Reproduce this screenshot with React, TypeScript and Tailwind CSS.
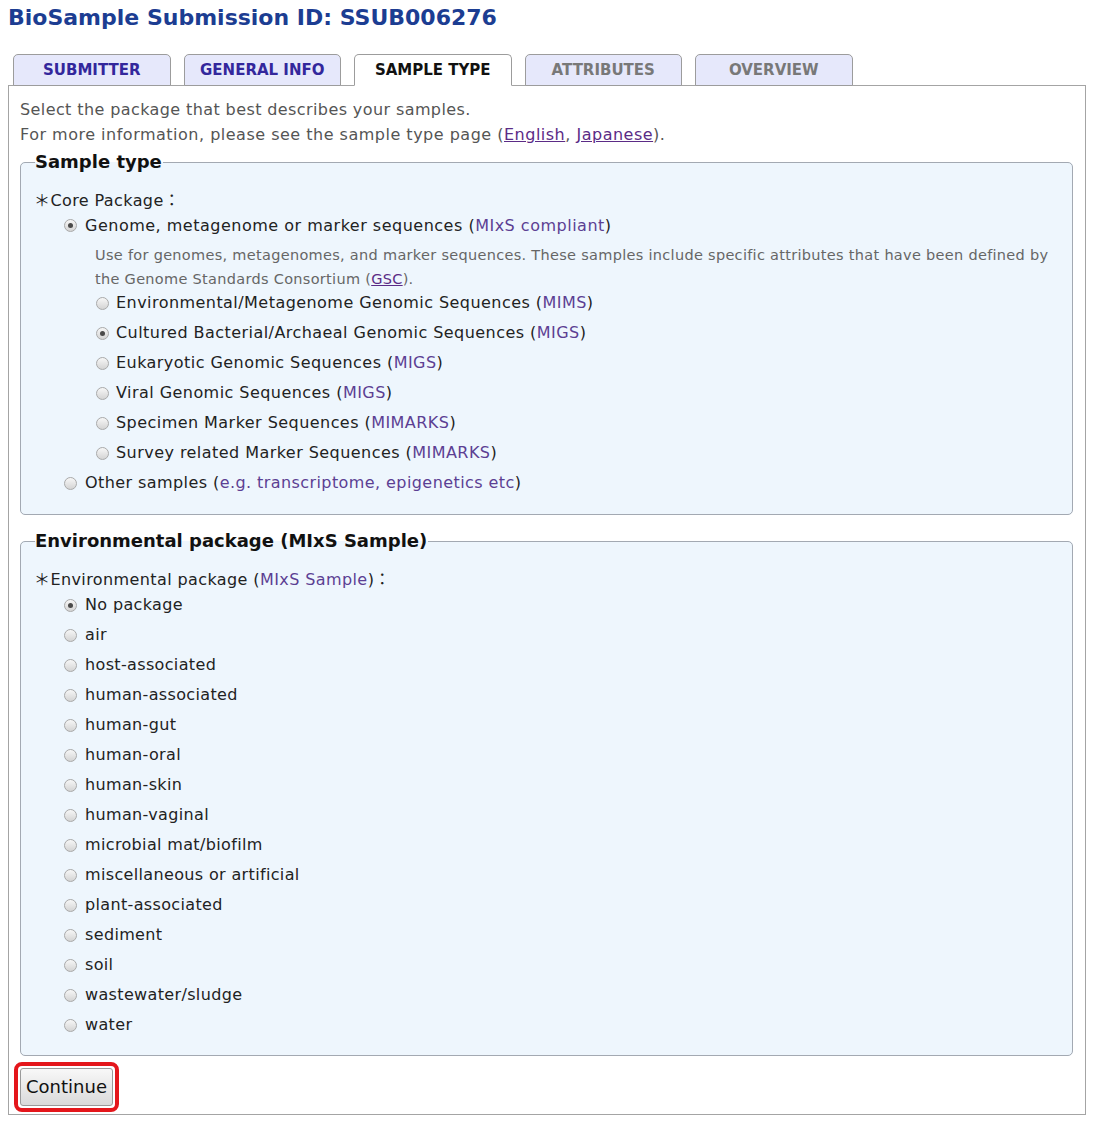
import React from "react";

const tabs = [
  { label: "SUBMITTER", state: "link" },
  { label: "GENERAL INFO", state: "link" },
  { label: "SAMPLE TYPE", state: "active" },
  { label: "ATTRIBUTES", state: "off" },
  { label: "OVERVIEW", state: "off" },
];

const coreSubs = [
  { text: "Environmental/Metagenome Genomic Sequences", tag: "MIMS" },
  { text: "Cultured Bacterial/Archaeal Genomic Sequences", tag: "MIGS", checked: true },
  { text: "Eukaryotic Genomic Sequences", tag: "MIGS" },
  { text: "Viral Genomic Sequences", tag: "MIGS" },
  { text: "Specimen Marker Sequences", tag: "MIMARKS" },
  { text: "Survey related Marker Sequences", tag: "MIMARKS" },
];

const envPackages = [
  "No package",
  "air",
  "host-associated",
  "human-associated",
  "human-gut",
  "human-oral",
  "human-skin",
  "human-vaginal",
  "microbial mat/biofilm",
  "miscellaneous or artificial",
  "plant-associated",
  "sediment",
  "soil",
  "wastewater/sludge",
  "water",
];

const Radio = ({ checked }: { checked?: boolean }) => (
  <span className="inline-flex h-[13px] w-[13px] shrink-0 items-center justify-center rounded-full border border-[#a9a9a9] bg-linear-to-b from-[#f7f7f7] to-[#d4d4d4]">
    {checked && <span className="h-[5px] w-[5px] rounded-full bg-[#4a4a4a]" />}
  </span>
);

const App: React.FC = () => {
  return (
    <div className="min-h-[1125px] w-[1094px] bg-white font-['DejaVu_Sans','Noto_Sans_CJK_JP',Verdana,sans-serif] text-[#222]">
      {/* Heading */}
      <h1 className="px-[8px] pt-[4px] text-[22px] font-bold leading-[28px] text-[#1c3d92]">
        BioSample Submission ID: SSUB006276
      </h1>

      <div className="px-[8px] pt-[22px]">
        {/* Tabs */}
        <div className="relative z-10 -mb-px flex gap-[13px] pl-[5px]">
          {tabs.map((t) => (
            <div
              key={t.label}
              className={
                "flex h-[32px] w-[157.5px] items-center justify-center rounded-t-[5px] border border-[#9c9c9c] text-[15px] font-bold " +
                (t.state === "active"
                  ? "border-b-white bg-white text-[#111]"
                  : t.state === "link"
                  ? "bg-[#e6e8fb] text-[#33279c]"
                  : "bg-[#e6e8fb] text-[#787878]")
              }
            >
              {t.label}
            </div>
          ))}
        </div>

        {/* Panel */}
        <div className="h-[1030px] border border-[#a4a4a4] pl-[11px] pr-[12px] pt-[11px]">
          <p className="text-[16px] leading-[25px] tracking-[0.4px] text-[#555]">
            Select the package that best describes your samples.
          </p>
          <p className="text-[16px] leading-[25px] tracking-[0.5px] text-[#555]">
            For more information, please see the sample type page (
            <a className="text-[#5b2b86] underline">English</a>,{" "}
            <a className="text-[#5b2b86] underline">Japanese</a>).
          </p>

          {/* Sample type */}
          <fieldset className="mt-[4px] rounded-[5px] border border-[#a3a9b2] bg-[#eef6fd] pb-[16px] pl-[13px] pr-[13px] pt-[15px]">
            <legend className="ml-[1px] pr-[1px] text-[18px] font-bold leading-[22px] text-[#111]">Sample type</legend>
            <div className="h-[25px] text-[16px] leading-[25px] tracking-[0.4px]">＊Core Package：</div>
            <label className="flex h-[25px] items-center pl-[30px] text-[16px] tracking-[0.5px]">
              <Radio checked />
              <span className="ml-[8px]">
                Genome, metagenome or marker sequences (<span className="text-[#5c3f93]">MIxS compliant</span>)
              </span>
            </label>
            <div className="mt-[5px] pl-[61px] text-[14.5px] leading-[24px] tracking-[0.3px] text-[#666]">
              Use for genomes, metagenomes, and marker sequences. These samples include specific attributes that have been defined by the Genome Standards Consortium (<a className="text-[#5b2b86] underline">GSC</a>).
            </div>
            <div className="-mt-[3px] pl-[62px]">
              {coreSubs.map((s) => (
                <label key={s.text} className="flex h-[30px] items-center text-[16px] tracking-[0.45px]">
                  <Radio checked={s.checked} />
                  <span className="ml-[7px]">
                    {s.text} (<span className="text-[#5c3f93]">{s.tag}</span>)
                  </span>
                </label>
              ))}
            </div>
            <label className="flex h-[30px] items-center pl-[30px] text-[16px] tracking-[0.42px]">
              <Radio />
              <span className="ml-[8px]">
                Other samples (<span className="text-[#5c3f93]">e.g. transcriptome, epigenetics etc</span>)
              </span>
            </label>
          </fieldset>

          {/* Environmental package */}
          <fieldset className="mt-[15px] rounded-[5px] border border-[#a3a9b2] bg-[#eef6fd] pb-[15px] pl-[13px] pr-[13px] pt-[15px]">
            <legend className="ml-[1px] pr-[1px] text-[18px] font-bold leading-[22px] text-[#111]">
              Environmental package (MIxS Sample)
            </legend>
            <div className="h-[25px] text-[16px] leading-[25px] tracking-[0.4px]">
              ＊Environmental package (<span className="text-[#5c3f93]">MIxS Sample</span>)：
            </div>
            <div className="-mt-[2px] pl-[30px]">
              {envPackages.map((p, i) => (
                <label key={p} className="flex h-[30px] items-center text-[16px] tracking-[0.35px]">
                  <Radio checked={i === 0} />
                  <span className="ml-[8px]">{p}</span>
                </label>
              ))}
            </div>
          </fieldset>

          {/* Continue */}
          <div className="-ml-[6px] mt-[6px] inline-block rounded-[8px] border-4 border-[#e4161b] p-[2px]">
            <button className="h-[38px] w-[93px] rounded-[3px] border border-[#9a9a9a] bg-linear-to-b from-[#f8f8f8] to-[#dadada] text-[18px] leading-none text-[#111]">
              Continue
            </button>
          </div>
        </div>
      </div>
    </div>
  );
};

export default App;
